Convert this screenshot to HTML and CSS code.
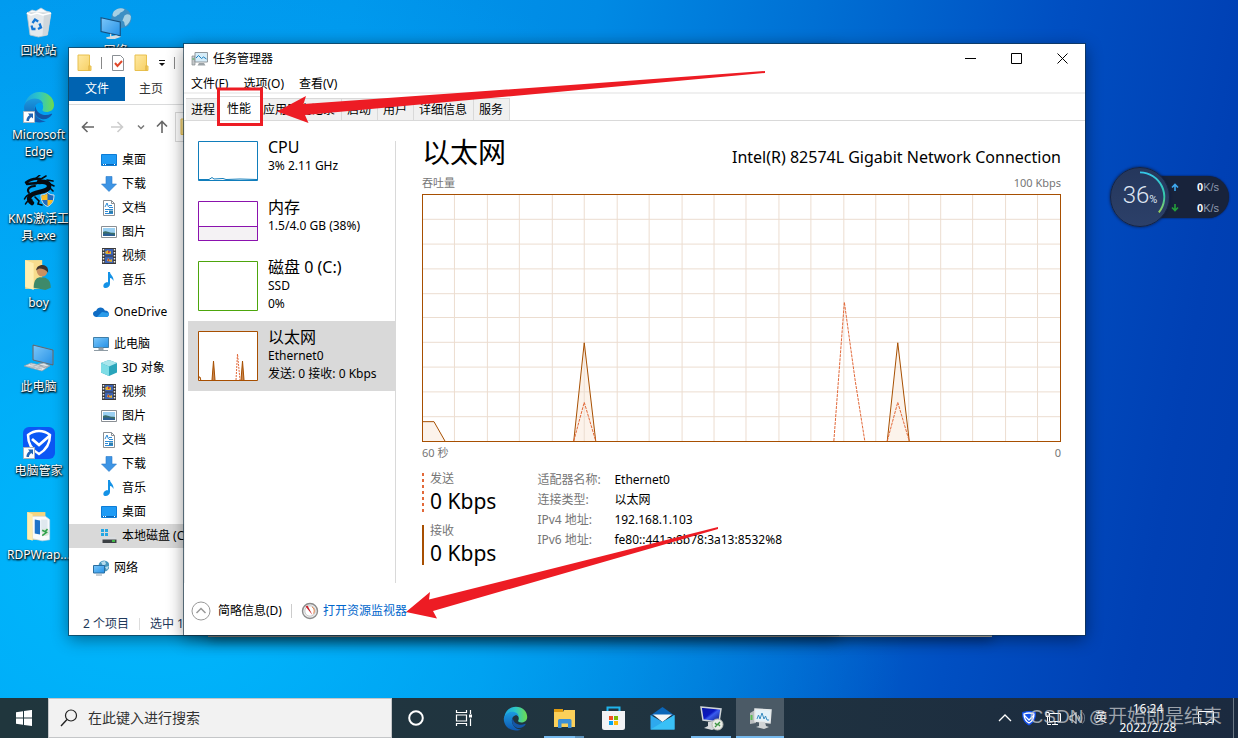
FILE: index.html
```html
<!DOCTYPE html>
<html lang="zh-CN">
<head>
<meta charset="utf-8">
<title>任务管理器</title>
<link rel="stylesheet" href="styles.css">
</head>
<body>
<svg class="defs" aria-hidden="true">
  <defs>
    <linearGradient id="g-fold" x1="0" y1="0" x2="1" y2="1"><stop offset="0" stop-color="#ffe9a2"/><stop offset="1" stop-color="#f6cf62"/></linearGradient>
    <linearGradient id="g-scr" x1="0" y1="0" x2="1" y2="1"><stop offset="0" stop-color="#7cc8fa"/><stop offset="1" stop-color="#2490e6"/></linearGradient>
    <linearGradient id="g-edge1" x1="0" y1="0" x2="1" y2="0"><stop offset="0" stop-color="#1aa5e4"/><stop offset=".5" stop-color="#2fc7c4"/><stop offset="1" stop-color="#6fdd4c"/></linearGradient>
    <linearGradient id="g-edge2" x1="0" y1="0" x2="0" y2="1"><stop offset="0" stop-color="#1b9be0"/><stop offset="1" stop-color="#0f57b0"/></linearGradient>
    <linearGradient id="g-navy" x1="0" y1="0" x2="1" y2="1"><stop offset="0" stop-color="#0a18a0"/><stop offset=".45" stop-color="#0a18c0"/><stop offset=".55" stop-color="#3a5cf0"/><stop offset="1" stop-color="#04106a"/></linearGradient>
    <linearGradient id="g-ring" x1="0" y1="0" x2="0" y2="1"><stop offset="0" stop-color="#35c6e8"/><stop offset=".6" stop-color="#35c8a8"/><stop offset="1" stop-color="#9ad05a"/></linearGradient>
  </defs>
  <symbol id="i-folder" viewBox="0 0 16 18"><path d="M1 1h11.500v11H14v4.500H1z" fill="url(#g-fold)" stroke="#e8c04e"/><path d="M12 11.500v5" stroke="#d8a838"/></symbol>
  <symbol id="i-shortcut" viewBox="0 0 12 12"><path d="M.5.5h11v11H.5z" fill="#fff" stroke="#a8b4c0"/><path d="M5 2.500h5v5L8.300 5.900C6.500 7 6 8.500 6 10L3.500 10C3.200 7.500 4.500 5.400 6.500 4.200z" fill="#2265b5"/></symbol>
  <symbol id="i-edge" viewBox="0 0 32 32">
    <path d="M2 17C1 8 8 1 16.500 1 25 1 31 7 31 14c0 5-4 7-7.500 7-3 0-4.500-1.200-4-2.300C21.500 15 19 10 13.500 10 7 10 3 13 2 17z" fill="url(#g-edge1)"/>
    <path d="M1 16c.5-4.500 5-8.500 11-8.500 5 0 8 3 8 6.500-1-2-3-2.500-4.500-2-4.500 1.500-5.500 8-2.500 12.500 2 3.500 6 5.500 10 5.500C17 33.500 1 31 1 16z" fill="url(#g-edge2)"/>
    <path d="M12.500 15c-2.500 6 .5 11.500 6 13 4 .9 8-.5 10.500-4.500.4-.7-.2-1-.8-.7-6.200 3.200-15.200.2-15.700-7.800z" fill="#1456a6"/>
  </symbol>
  <symbol id="i-bin" viewBox="0 0 30 32">
    <path d="M3 6l5-3 4 1 5-3 5 3 4 1-1 3H4z" fill="#f6f9fb" stroke="#c4ccd2" stroke-width=".7"/>
    <path d="M3 6h24l-3.500 22-9 2-8.500-2z" fill="#e3e9ed" stroke="#bac4ca" stroke-width=".8"/>
    <path d="M20 7h7l-3.500 21-5 1z" fill="#cfd7dc"/>
    <path d="M3 6l4 2 6-2 6 2 8-2" fill="none" stroke="#fff" stroke-width="1.500"/>
    <g fill="none" stroke="#1576d4" stroke-width="2.300"><path d="M8.500 16l2.500-3.500 3.200 2"/><path d="M15.500 16.500l1.500 4-3 1.500"/><path d="M7.500 18.500l1 3.500h3"/></g>
  </symbol>
  <symbol id="i-globe" viewBox="0 0 30 30">
    <circle cx="20" cy="10.500" r="9.500" fill="#3c8fc4"/><path d="M13 4c3-3 7-3.500 10-2-1 3-4 2-5 5-2 0-3 3-5 2-2-1-1-3 0-5zM23 8c3-2 5-1 6 1 0 4-2 7-5 9-2-2 0-4-3-5z" fill="#a5d0e4"/>
    <path d="M1 10l18 4v13L1 23z" fill="url(#g-scr)" stroke="#164f7e" stroke-width="1"/><path d="M10 25v3M6 29l9-2 3 1-6 2z" stroke="#d9dfe3" stroke-width="1.200" fill="#d9dfe3"/>
  </symbol>
  <symbol id="i-dragon" viewBox="0 0 32 32">
    <g fill="none" stroke="#060a10" stroke-linecap="round"><path d="M16 7c6-1 11 1 10 5-1 5-10 4-16 7-5 2.500-5 6-1 9" stroke-width="4.500"/><path d="M3 7.500c4-3 8-4.500 14-3.500M4 9c4-1 6 0 10-1" stroke-width="2.500"/><path d="M8 20c-3-1-5 1-6.500 4M9 25c-3 0-5 1-6.500 4M12 22l4 4-1 3 4 1M24 5l6 1M25 8l6 3M27 13l3 3M12 4l5-4M18 4l5-3" stroke-width="1.600"/><path d="M6 18c-3-4 1-7 6-7" stroke-width="2"/></g>
    <path d="M18 20c3 0 5-1 6.500-2.500C26 19 28 20 31 20c0 6-2 9.500-6.500 11.500C20 29.500 18 26 18 20z" fill="#1f6dc0" stroke="#dce6ee"/>
    <path d="M24.500 18.500V25H19c-.4-1.300-.5-2.700-.5-4.500 2.500 0 4.500-.8 6-2z" fill="#fcbc25"/><path d="M24.500 25h5.500c-1 3-2.700 4.700-5.500 6z" fill="#fcbc25"/>
  </symbol>
  <symbol id="i-user" viewBox="0 0 28 30"><path d="M1 1h16v27H1z" fill="#f7dc8c"/><path d="M1 1l8 3v25l-8-3z" fill="#ffeeb0"/><path d="M9 27c0-8 3-10 7-10 6 0 9 3 9 10l-5 2z" fill="#3e8a6a"/><circle cx="17" cy="11.500" r="5" fill="#c99062"/><path d="M11.500 11c-1-6 10-8 11-1l0 3c-2-3-5-4-8-4-1 0-2 1-3 2z" fill="#3c332d"/></symbol>
  <symbol id="i-computer" viewBox="0 0 32 30"><path d="M10 1l20 5v15L10 16z" fill="url(#g-scr)" stroke="#8b9aa5"/><path d="M10 1l20 5v15L10 16z" fill="none" stroke="#334a5c" stroke-width=".6"/><path d="M15 20l6-1 6 3-5 2zM1 22l7-3 17 4-6 4z" fill="#dfe4e8" stroke="#8f9aa2" stroke-width=".7"/><path d="M4 22l15 3M7 20.500l15 3.200M8 24l7-3.500M13 25l6-3" stroke="#a3adb5" stroke-width=".7"/></symbol>
  <symbol id="i-shield" viewBox="0 0 32 32"><rect width="32" height="32" rx="6" fill="#0b57f5"/><path d="M16 4c4 0 8 1.500 11 4 0 9-4 15-11 19C9 23 5 17 5 8c3-2.500 7-4 11-4z" fill="none" stroke="#fff" stroke-width="2.500"/><path d="M9 12l7 6L27 8.500" fill="none" stroke="#fff" stroke-width="2.800"/></symbol>
  <symbol id="i-fileset" viewBox="0 0 24 30"><path d="M1 1h17v26H1z" fill="#f5d57e"/><path d="M5 5h13l4 3v19l-7 1-9-2z" fill="#f9fbfc" stroke="#c8d2d8" stroke-width=".6"/><path d="M8 8l5 1v13l-5-1z" fill="#1e73c8"/><path d="M14 8h6v12h-6z" fill="#dfe8ee"/><circle cx="18" cy="20" r="3.500" fill="#dce8dc"/><path d="M15 18l4 2-4 3M20 17l-2 2" stroke="#31a24c" stroke-width="1.500" fill="none"/><path d="M1 1l5 2v25l-5-2z" fill="#ffedb0"/></symbol>
  <symbol id="i-desk" viewBox="0 0 16 16"><path d="M.5 2.500h15v11H.5z" fill="#1e9bf5" stroke="#0d7cd6"/><path d="M1 12h14v1H1z" fill="#0a66b8"/><path d="M2 12.500h1M4 12.500h1M13 12.500h1" stroke="#fff"/></symbol>
  <symbol id="i-down" viewBox="0 0 16 16"><path d="M5 .5h6V8h4.500L8 15.500.5 8H5z" fill="#3d94e4" stroke="#2a7bca" stroke-width=".6"/></symbol>
  <symbol id="i-doc" viewBox="0 0 16 16"><path d="M2.500.5h8l3 3v12h-11z" fill="#fff" stroke="#8a8f94"/><path d="M10.500.5v3h3" fill="none" stroke="#8a8f94"/><path d="M4 7l2-4 1.500 4M8 5.500h3M8 7.500h4M4 9.500h8M4 11.500h3M4 13.500h8" stroke="#2d8bd6" fill="none"/><path d="M8 10.500h4v2.500H8z" fill="#2d7fae"/></symbol>
  <symbol id="i-pic" viewBox="0 0 16 16"><path d="M.5 2.500h15v11H.5z" fill="#fff" stroke="#8a8f94"/><path d="M2 4h12v8H2z" fill="#9bd0f2"/><path d="M2 8c3-2 5 1 12 1v3H2z" fill="#3b6e6a"/><path d="M2 10c5-1 8 0 12 1v1H2z" fill="#2b5f94"/></symbol>
  <symbol id="i-video" viewBox="0 0 16 16"><path d="M1 0h14v16H1z" fill="#3a3a3c"/><path d="M4 1h8v6.500H4z" fill="#3c62b4"/><path d="M4 8.500h8V15H4z" fill="#3c62b4"/><path d="M4 4l3-2 1 2 2-1v3H5zM6 13l1-3 2 2 2-1v3z" fill="#e0b030"/><path d="M7 3h1.500v2H7zM7 11h1v2H7z" fill="#d13a2a"/><path d="M2.500 1v15M13.500 1v15" stroke="#f0f0f0" stroke-width="1.500" stroke-dasharray="1.500 1.500"/></symbol>
  <symbol id="i-music" viewBox="0 0 16 16"><path d="M7 0h2c0 3 4 4 3.500 9-1-2-2-3-3.500-3v6c0 2-2 4-4.500 4S2 13.500 3 12s2.500-2 4-1.700z" fill="#1492e6"/></symbol>
  <symbol id="i-cloud" viewBox="0 0 16 16"><path d="M3.500 13C1.500 13 0 11.700 0 9.800 0 8 1.500 6.700 3.200 6.700 4 4.500 5.700 3.500 7.500 3.500c2 0 3.500 1 4.300 2.900C14.500 6.500 16 8 16 9.900S14.600 13 12.700 13z" fill="#0f6cc4"/><path d="M4 13l5-5 6.500 1c1 2 0 4-2.800 4z" fill="#2b9cea"/></symbol>
  <symbol id="i-pc" viewBox="0 0 16 16"><path d="M.5 1.500h15v10H.5z" fill="url(#g-scr)" stroke="#3f7ea8"/><path d="M6 12h4v2H6zM1 14.500h14" fill="#9aa7b0" stroke="#8f9ca5"/></symbol>
  <symbol id="i-cube" viewBox="0 0 16 16"><path d="M8 0l8 3v9.500L8 16l-8-3.500V3z" fill="#2aa5bb"/><path d="M8 0l8 3-8 3.500L0 3z" fill="#a9e6ec"/><path d="M0 3l8 3.500V16l-8-3.500z" fill="#7edde6"/></symbol>
  <symbol id="i-disk" viewBox="0 0 16 16"><path d="M0 1h3v3H0zM4 1h3v3H4zM0 5h3v3H0zM4 5h3v3H4z" fill="#25a7e4"/><path d="M3 9h11l1.500 3H1.500z" fill="#dadde0"/><path d="M1.500 11.500h14V15h-14z" fill="#3c4044"/><path d="M11 13h3" stroke="#45e04a" stroke-width="1.500"/></symbol>
  <symbol id="i-chart" viewBox="0 0 18 16"><path d="M1 5h3v9H1z" fill="#c4c8ca" stroke="#85898c" stroke-width=".7"/><path d="M1.500 8h2" stroke="#3fae49"/><path d="M4 1.500h12.500v9.500H4z" fill="#d5ecf8" stroke="#8f979c"/><path d="M5 7l2.500-2.500 3 3 2-1.500 3 2" fill="none" stroke="#1a7fc0"/><path d="M8 12h5l1.500 2.500h-8z" fill="#9ca3a7"/></symbol>
</svg>

<main class="desktop">
  <nav class="shortcuts" aria-label="桌面">
    <a href="#" class="shortcut"><svg class="shortcut-icon"><use href="#i-bin"/></svg><span>回收站</span></a>
    <a href="#" class="shortcut"><span class="badged"><svg class="shortcut-icon"><use href="#i-edge"/></svg><svg class="badge"><use href="#i-shortcut"/></svg></span><span>Microsoft Edge</span></a>
    <a href="#" class="shortcut"><svg class="shortcut-icon"><use href="#i-dragon"/></svg><span>KMS激活工具.exe</span></a>
    <a href="#" class="shortcut"><svg class="shortcut-icon"><use href="#i-user"/></svg><span>boy</span></a>
    <a href="#" class="shortcut"><svg class="shortcut-icon"><use href="#i-computer"/></svg><span>此电脑</span></a>
    <a href="#" class="shortcut"><span class="badged"><svg class="shortcut-icon"><use href="#i-shield"/></svg><svg class="badge"><use href="#i-shortcut"/></svg></span><span>电脑管家</span></a>
    <a href="#" class="shortcut"><svg class="shortcut-icon"><use href="#i-fileset"/></svg><span>RDPWrap...</span></a>
    <a href="#" class="shortcut"><svg class="shortcut-icon"><use href="#i-globe"/></svg><span>网络</span></a>
  </nav>

  <div class="window back-window"></div>

  <section class="window explorer" aria-label="文件资源管理器">
    <header class="ex-title">
      <svg class="ic-folder"><use href="#i-folder"/></svg><i class="sep"></i>
      <svg class="ic-16" viewBox="0 0 16 16"><path d="M2.500.5h8l3 3v12h-11z" fill="#fff" stroke="#8a8f94"/><path d="M5 8l2.500 3L12 6" fill="none" stroke="#e0482a" stroke-width="2"/></svg>
      <svg class="ic-folder"><use href="#i-folder"/></svg>
      <svg class="ic-8" viewBox="0 0 8 8"><path d="M1 1.500h6" stroke="#111"/><path d="M1 4h6L4 7z" fill="#111"/></svg>
      <i class="sep"></i><span>R</span>
    </header>
    <div class="ribbon"><button class="ribbon-file">文件</button><button class="ribbon-tab">主页</button></div>
    <div class="ex-nav">
      <svg class="ic-14" viewBox="0 0 14 14"><path d="M13 7H2M6.500 2L1.500 7l5 5" fill="none" stroke="#666" stroke-width="1.600"/></svg>
      <svg class="ic-14" viewBox="0 0 14 14"><path d="M1 7h11M7.500 2l5 5-5 5" fill="none" stroke="#ccc" stroke-width="1.600"/></svg>
      <svg class="ic-8" viewBox="0 0 8 8"><path d="M1 2.500l3 3 3-3" fill="none" stroke="#777" stroke-width="1.500"/></svg>
      <svg class="ic-14" viewBox="0 0 14 14"><path d="M7 13V2M2 6.500l5-5 5 5" fill="none" stroke="#666" stroke-width="1.600"/></svg>
      <div class="address"><svg class="ic-folder"><use href="#i-folder"/></svg></div>
    </div>
    <div class="tree">
      <a href="#" class="node child"><svg><use href="#i-desk"/></svg>桌面</a>
      <a href="#" class="node child"><svg><use href="#i-down"/></svg>下载</a>
      <a href="#" class="node child"><svg><use href="#i-doc"/></svg>文档</a>
      <a href="#" class="node child"><svg><use href="#i-pic"/></svg>图片</a>
      <a href="#" class="node child"><svg><use href="#i-video"/></svg>视频</a>
      <a href="#" class="node child"><svg><use href="#i-music"/></svg>音乐</a>
      <a href="#" class="node root"><svg><use href="#i-cloud"/></svg>OneDrive</a>
      <a href="#" class="node root"><svg><use href="#i-pc"/></svg>此电脑</a>
      <a href="#" class="node child"><svg><use href="#i-cube"/></svg>3D 对象</a>
      <a href="#" class="node child"><svg><use href="#i-video"/></svg>视频</a>
      <a href="#" class="node child"><svg><use href="#i-pic"/></svg>图片</a>
      <a href="#" class="node child"><svg><use href="#i-doc"/></svg>文档</a>
      <a href="#" class="node child"><svg><use href="#i-down"/></svg>下载</a>
      <a href="#" class="node child"><svg><use href="#i-music"/></svg>音乐</a>
      <a href="#" class="node child"><svg><use href="#i-desk"/></svg>桌面</a>
      <a href="#" class="node child current"><svg><use href="#i-disk"/></svg>本地磁盘 (C:)</a>
      <a href="#" class="node root"><svg viewBox="0 0 16 16"><circle cx="11" cy="6" r="5.500" fill="#4596bd"/><path d="M8 2l4-1 1 3-3 2zM12 7l4-1-2 4z" fill="#b7dcec"/><path d="M.5 5.500h11v7.500H.5z" fill="url(#g-scr)" stroke="#2a6d9f"/><path d="M3 15h6" stroke="#8ea0ac"/></svg>网络</a>
    </div>
    <footer class="ex-status"><span>2 个项目</span><i></i><span>选中 1</span></footer>
  </section>

  <section class="window manager" aria-label="任务管理器">
    <header class="tm-title">
      <svg class="tm-icon"><use href="#i-chart"/></svg><h1>任务管理器</h1>
      <button aria-label="最小化"><svg viewBox="0 0 11 11"><path d="M0 5.500h11" stroke="#000"/></svg></button>
      <button aria-label="最大化"><svg viewBox="0 0 11 11"><path d="M.5.500h10v10H.5z" fill="none" stroke="#000"/></svg></button>
      <button aria-label="关闭"><svg viewBox="0 0 11 11"><path d="M.5.500l10 10M10.500.500l-10 10" stroke="#000"/></svg></button>
    </header>
    <nav class="menu"><button>文件(F)</button><button>选项(O)</button><button>查看(V)</button></nav>
    <div class="tabs" role="tablist">
      <button role="tab">进程</button><button role="tab" class="selected" aria-selected="true">性能</button><button role="tab">应用历史记录</button><button role="tab">启动</button><button role="tab">用户</button><button role="tab">详细信息</button><button role="tab">服务</button>
    </div>
    <div class="tm-body">
      <aside class="resources">
        <button class="resource">
          <svg class="thumb" viewBox="0 0 60 40"><path d="M.5.500h59v39H.5z" fill="#fff" stroke="#117dbb"/><path d="M1 38.500h10l3-2 2 1.500 9-.500 3 1 14-.500 17 .500" fill="none" stroke="#117dbb"/></svg>
          <span class="res-text"><strong>CPU</strong><span>3% 2.11 GHz</span></span>
        </button>
        <button class="resource">
          <svg class="thumb" viewBox="0 0 60 40"><path d="M.5.500h59v39H.5z" fill="#fff"/><path d="M.5 25.500h59v14H.5z" fill="#f4f2f4" stroke="#8b12ae"/><path d="M.5.500h59v39H.5z" fill="none" stroke="#8b12ae"/></svg>
          <span class="res-text"><strong>内存</strong><span>1.5/4.0 GB (38%)</span></span>
        </button>
        <button class="resource">
          <svg class="thumb tall" viewBox="0 0 60 50"><path d="M.5.500h59v49H.5z" fill="#fff" stroke="#4da60c"/></svg>
          <span class="res-text"><strong>磁盘 0 (C:)</strong><span>SSD</span><span>0%</span></span>
        </button>
        <button class="resource active">
          <svg class="thumb tall" viewBox="0 0 60 50"><path d="M.5.500h59v49H.5z" fill="#fff" stroke="#a74f01"/><path d="M1 46l1 0 1 4M14 49l1.500-19L17 49M43 49l1.500-19L46 49" fill="#c98750" stroke="#a74f01"/><path d="M38 49l1.500-26L42 49" fill="none" stroke="#e2693a" stroke-dasharray="2 1"/></svg>
          <span class="res-text"><strong>以太网</strong><span>Ethernet0</span><span>发送: 0 接收: 0 Kbps</span></span>
        </button>
      </aside>
      <section class="detail">
        <div class="heading"><h2>以太网</h2><p>Intel(R) 82574L Gigabit Network Connection</p></div>
        <div class="scale"><span>吞吐量</span><span>100 Kbps</span></div>
        <div class="chart">
          <svg viewBox="0 0 638 248" preserveAspectRatio="none" role="img" aria-label="吞吐量">
            <path class="fill" d="M0 229h11l11 19H0zM151 248l11-99 11 99zM465 248l11-99 11 99z"/>
            <path class="grid" d="M31.500 0v248M64.500 0v248M96.500 0v248M129.500 0v248M161.500 0v248M194.500 0v248M226.500 0v248M259.500 0v248M291.500 0v248M323.500 0v248M356.500 0v248M388.500 0v248M421.500 0v248M453.500 0v248M486.500 0v248M518.500 0v248M550.500 0v248M583.500 0v248M615.500 0v248M0 24.500h638M0 49.500h638M0 74.500h638M0 99.500h638M0 123.500h638M0 148.500h638M0 173.500h638M0 198.500h638M0 223.500h638"/>
            <path class="received" d="M0 228.500h11l11 19.500M151 248l10.500-99L173 248M465 248l10.500-99L487 248"/>
            <path class="sent" d="M151 248l10.500-39L173 248M411.500 248l10.500-140 11 80 9.500 60M465 248l10.500-39L487 248"/>
          </svg>
        </div>
        <div class="scale axis"><span>60 秒</span><span>0</span></div>
        <div class="stats">
          <div class="rates">
            <div class="rate out"><span>发送</span><b>0 Kbps</b></div>
            <div class="rate in"><span>接收</span><b>0 Kbps</b></div>
          </div>
          <table class="facts">
            <tr><th scope="row">适配器名称:</th><td>Ethernet0</td></tr>
            <tr><th scope="row">连接类型:</th><td>以太网</td></tr>
            <tr><th scope="row">IPv4 地址:</th><td>192.168.1.103</td></tr>
            <tr><th scope="row">IPv6 地址:</th><td>fe80::441a:8b78:3a13:8532%8</td></tr>
          </table>
        </div>
      </section>
    </div>
    <footer class="tm-foot">
      <button><svg viewBox="0 0 20 20"><circle cx="10" cy="10" r="9" fill="#fff" stroke="#999"/><path d="M5.500 12L10 7.500l4.500 4.500" fill="none" stroke="#999" stroke-width="1.500"/></svg>简略信息(D)</button>
      <i></i>
      <a href="#"><svg viewBox="0 0 18 18"><circle cx="9" cy="9" r="7.500" fill="#eee" stroke="#8b8b8b" stroke-width="1.400"/><circle cx="9" cy="9" r="5.200" fill="#fff" stroke="#c8c8c8"/><path d="M4.500 4.500l2-1L11.500 13z" fill="#c8202a"/><path d="M11 5c2 1 3 4 1.500 6.500" fill="none" stroke="#e8702a"/></svg>打开资源监视器</a>
    </footer>
    <svg class="marks" aria-hidden="true" viewBox="184 44 901 591">
      <g fill="#ed1c24"><path d="M277 111.500L306 96l-2.500 8L765 71v2L305 115l3.500 8z"/><path d="M406 612l24-20-1 7.500L718 527v2L433 611l4 7.500z"/></g>
      <path d="M218.500 89h43v35.500h-43z" fill="none" stroke="#ed1c24" stroke-width="3"/>
    </svg>
  </section>

  <aside class="monitor" aria-label="网速">
    <div class="gauge">
      <svg viewBox="0 0 60 60"><path d="M30 4.500A25.500 25.500 0 0 1 49.500 46" fill="none" stroke="url(#g-ring)" stroke-width="2"/></svg>
      <span class="pct">36<small>%</small></span>
    </div>
    <div class="speeds">
      <div><svg viewBox="0 0 8 8"><path d="M4 8V2M1 4.500L4 1.500l3 3" fill="none" stroke="#3fa9f0" stroke-width="1.600"/></svg><b>0</b><span>K/s</span></div>
      <div><svg viewBox="0 0 8 8"><path d="M4 0v6M1 3.500l3 3 3-3" fill="none" stroke="#25a03c" stroke-width="1.600"/></svg><b>0</b><span>K/s</span></div>
    </div>
  </aside>
</main>

<footer class="taskbar">
  <button class="tb" aria-label="开始"><svg class="s16" viewBox="0 0 16 16"><path d="M0 2.200L7 1.200V7.500H0zM8 1l8-1.100V7.500H8zM0 8.500h7v6.300l-7-1zM8 8.500h8V16l-8-1.100z" fill="#fff"/></svg></button>
  <label class="search"><svg viewBox="0 0 18 18"><circle cx="11" cy="6.500" r="5.500" fill="none" stroke="#222" stroke-width="1.200"/><path d="M7 10.500L1 17" stroke="#222" stroke-width="1.400"/></svg><input type="text" placeholder="在此键入进行搜索" aria-label="搜索"></label>
  <button class="tb" aria-label="Cortana"><svg class="s16" viewBox="0 0 16 16"><circle cx="8" cy="8" r="6.800" fill="none" stroke="#fff" stroke-width="2"/></svg></button>
  <button class="tb" aria-label="任务视图"><svg class="s18" viewBox="0 0 18 18"><path d="M1.500 1v2.500h10V1M1.500 17v-2.500h10V17M1.500 6h10v6h-10zM15.500 1v4M15.500 9.500V17" fill="none" stroke="#fff" stroke-width="1.200"/><path d="M14 5.500h3v3h-3z" fill="#fff"/></svg></button>
  <div class="apps">
    <button class="tb" aria-label="Edge"><svg class="s25"><use href="#i-edge"/></svg></button>
    <button class="tb running stacked" aria-label="资源管理器"><svg class="s23" viewBox="0 0 23 23"><path d="M1 2h9v4H1z" fill="#e09b10"/><path d="M1 5h9l1-2h11v17H1z" fill="#fbd05a"/><path d="M5 13.500Q5 12 6.500 12h10.500q1.500 0 1.500 1.500V21h-3.500v-4.500H8.500V21H5z" fill="#3c8fd6"/></svg></button>
    <button class="tb" aria-label="商店"><svg class="s25" viewBox="0 0 25 25"><path d="M6.500 6V1.500h12V6" fill="none" stroke="#1fb4ec" stroke-width="2"/><path d="M1 5h23v16.500a2.500 2.500 0 0 1-2.500 2.500h-18A2.500 2.500 0 0 1 1 21.500z" fill="#f2f3f5"/><path d="M8 10h4v4H8z" fill="#f05023"/><path d="M13 10h4v4h-4z" fill="#7fba02"/><path d="M8 15h4v4H8z" fill="#05a5f0"/><path d="M13 15h4v4h-4z" fill="#ffb902"/></svg></button>
    <button class="tb" aria-label="邮件"><svg class="s25" viewBox="0 0 25 25"><path d="M.5 9.500L12.500 1l12 8.500z" fill="#0b66b8"/><path d="M3 8.500h19L12.500 16z" fill="#f4f6f8"/><path d="M.5 9l12 7 12-7V23.500H.5z" fill="#2ea9ee"/><path d="M.5 23.500l24-14.500v14.500z" fill="#39c0f6"/></svg></button>
    <button class="tb running" aria-label="远程桌面"><svg class="s25" viewBox="0 0 25 25"><path d="M2 1l20 2-2 13L4 14z" fill="url(#g-navy)" stroke="#cfd5d8" stroke-width="1.500"/><path d="M9 16h6l1 4 2 2-5 2-8-2 4-2z" fill="#d5d8da"/><circle cx="18.500" cy="18.500" r="5.500" fill="#e9ebe6" stroke="#b5bab3"/><path d="M16 17l2 2-2 2M21 16l-2 2 2 2" fill="none" stroke="#3b9440" stroke-width="1.400"/></svg></button>
    <button class="tb running focused" aria-label="任务管理器"><svg class="s25" viewBox="0 0 25 25"><path d="M2 7l5-3 1 13-6 1z" fill="#b9bdbf"/><path d="M2.500 9h2v5h-2z" fill="#5dbf55"/><path d="M7 3l16 1-1 13L7 15z" fill="#e4f1f8" stroke="#e6e9ea" stroke-width="1.500"/><path d="M9 13l1.500-4 1.500 4 2-6 2 6 1.500-3 1.500 4h2" fill="none" stroke="#3a8dc2"/><path d="M11 16h6l1 4 3 1-5 2-8-2 3-1z" fill="#d0d4d6"/></svg></button>
  </div>
  <div class="tray">
    <button class="ti" aria-label="显示隐藏的图标"><svg class="s16" viewBox="0 0 16 16"><path d="M2 11l6-6 6 6" fill="none" stroke="#fff" stroke-width="1.300"/></svg></button>
    <button class="ti" aria-label="电脑管家"><svg class="s16" viewBox="0 0 16 16"><path d="M8 1c3 0 5 .5 7 1.500C15 9 13 13 8 15.500 3 13 1 9 1 2.500 3 1.500 5 1 8 1z" fill="#1450ea"/><path d="M8 3c2 0 3.500.4 5 1 0 4-1.500 7-5 9-3.500-2-5-5-5-9 1.500-.6 3-1 5-1zM3 5l5 5 5-5" fill="none" stroke="#fff" stroke-width="1.300"/></svg></button>
    <button class="ti" aria-label="网络"><svg class="s16" viewBox="0 0 16 16"><path d="M4.500 3.500h11v8h-11zM7 14.500h6M10 12v2M1 2.500h3v4H1zM2.500 7v7.500H6" fill="none" stroke="#fff"/></svg></button>
    <button class="ti" aria-label="音量"><svg class="s16" viewBox="0 0 16 16"><path d="M1 6h2.500L7 2.500v11L3.500 10H1z" fill="none" stroke="#fff"/><path d="M9.500 5.500c1 1.500 1 3.500 0 5" fill="none" stroke="#fff"/><path d="M11.500 4c2 2.500 2 5.500 0 8M13.500 2.500c3 3.500 3 7.500 0 11" fill="none" stroke="#7b8794"/></svg></button>
    <button class="ti">英</button>
    <time class="clock"><span>16:24</span><span>2022/2/28</span></time>
    <button class="ti note" aria-label="通知"><svg class="s16" viewBox="0 0 16 16"><path d="M.5 1.500h15v11H11L8 15v-2.500H.5z" fill="none" stroke="#fff"/></svg></button>
    <i class="peek"></i>
    <span class="watermark">CSDN @开始即是结束</span>
  </div>
</footer>
</body>
</html>
```
FILE: styles.css
```css
* { box-sizing: border-box; }

html, body { height: 100%; }

body {
  margin: 0;
  display: flex;
  flex-direction: column;
  overflow: hidden;
  font: 12px/18px "Noto Sans", "Noto Sans CJK SC", sans-serif;
  color: #000;
}

button {
  margin: 0;
  padding: 0;
  border: 0;
  background: none;
  font: inherit;
  color: inherit;
}

a { color: inherit; text-decoration: none; }
svg { display: block; flex: none; }
h1, h2, p { margin: 0; font-weight: 400; }
.defs { position: absolute; width: 0; height: 0; }

/* Desktop */
.desktop {
  position: relative;
  flex: 1;
  min-height: 0;
  background:
    radial-gradient(ellipse 62% 90% at 12% 80%, rgba(0, 188, 255, .9), rgba(0, 180, 255, 0)),
    linear-gradient(100deg, #0098ee 0%, #0096ec 26%, #008ae4 44%, #0070d4 60%, #004fc2 78%, #0040b4 92%, #003cae 100%);
}

.shortcuts {
  display: grid;
  grid-template-columns: 77px 77px;
  grid-template-rows: repeat(7, 84px);
  grid-auto-flow: column;
  padding-top: 7px;
}

.shortcut {
  display: flex;
  flex-direction: column;
  align-items: center;
  gap: 3px;
  padding: 0 4px;
  line-height: 17px;
  color: #fff;
  text-align: center;
  text-shadow: 0 1px 2px #000, 1px 1px 2px #000;
}
.shortcut-icon { width: 32px; height: 32px; }
.badged { position: relative; }
.badge { position: absolute; left: 0; bottom: 0; width: 12px; height: 12px; }

.window {
  position: absolute;
  background: #fff;
  box-shadow: 0 0 0 1px rgba(20, 50, 70, .65), 0 4px 16px rgba(0, 0, 0, .45);
}

.back-window { left: 208px; right: 246px; top: 80px; bottom: 61px; background: #b5b0a8; box-shadow: 0 4px 12px rgba(0, 0, 0, .3); }

/* Explorer */
.explorer {
  left: 69px;
  right: 400px;
  top: 48px;
  bottom: 63px;
  display: flex;
  flex-direction: column;
}
.ex-title { display: flex; align-items: center; gap: 8px; height: 29px; padding-left: 8px; color: #999; }
.sep { width: 1px; height: 12px; background: #888; }
.ic-folder { width: 16px; height: 18px; }
.ic-16 { width: 16px; height: 16px; }
.ic-14 { width: 14px; height: 14px; }
.ic-8 { width: 8px; height: 8px; }
.ribbon { display: flex; height: 28px; border-bottom: 1px solid #dadbdc; }
.ribbon-file { width: 56px; height: 24px; background: #0063b1; color: #fff; }
.ribbon-tab { width: 52px; height: 24px; color: #333; }
.ex-nav { display: flex; align-items: center; height: 43px; padding-left: 12px; gap: 15px; }
.ex-nav .ic-8 { margin: 0 -5px 0 -2px; }
.address { flex: 1; height: 30px; margin-left: -9px; padding: 5px 4px; border: 1px solid #d9d9d9; }
.tree { flex: 1; }
.node { display: flex; align-items: center; gap: 5px; height: 24px; padding-left: 24px; }
.node svg { width: 16px; height: 16px; }
.child { padding-left: 32px; }
.root { margin-top: 8px; }
.current { background: #d9d9d9; }
.ex-status { display: flex; align-items: center; gap: 10px; height: 23px; padding-left: 14px; color: #1e395b; }
.ex-status i { width: 1px; height: 12px; background: #ddd; }

/* Task manager */
.manager {
  left: 184px;
  right: 153px;
  top: 44px;
  bottom: 63px;
  display: flex;
  flex-direction: column;
}
.tm-title { display: flex; align-items: center; height: 29px; padding-left: 7px; }
.tm-title h1 { flex: 1; font-size: 12px; margin-left: 4px; }
.tm-title button { display: flex; align-items: center; justify-content: center; width: 46px; height: 29px; }
.tm-title button svg { width: 11px; height: 11px; }
.tm-icon { width: 18px; height: 16px; }
.menu { display: flex; gap: 15px; height: 21px; padding: 2px 0 0 7px; border-bottom: 2px solid #f0f0f0; }
.tabs { display: flex; align-items: flex-end; height: 27px; padding: 2px 2px 0; border-bottom: 1px solid #d9d9d9; }
.tabs button {
  height: 22px;
  padding: 0 6px 0 5px;
  border: 1px solid #d9d9d9;
  border-width: 1px 1px 0 0;
  background: #f0f0f0;
  line-height: 20px;
}
.tabs .selected { position: relative; height: 24px; margin: 0 -3px; padding: 0 9px 0 8px; background: #fff; }
.tm-body { flex: 1; min-height: 0; display: flex; padding-top: 20px; border-left: 1px solid #f0f0f0; }
.resources { width: 211px; padding-left: 3px; border-right: 1px solid #d9d9d9; }
.resource { display: flex; gap: 10px; width: 100%; padding: 10px; text-align: left; white-space: nowrap; }
.resource:first-child { padding-top: 0; }
.thumb { width: 60px; height: 40px; }
.tall { height: 50px; }
.res-text { display: flex; flex-direction: column; height: 40px; margin-top: -4px; line-height: 18px; }
.res-text strong { font-size: 16px; font-weight: 400; line-height: 20px; }
.active { background: #d9d9d9; }
.detail { flex: 1; min-width: 0; display: flex; flex-direction: column; margin-top: -11px; padding: 0 24px 18px 26px; }
.heading { display: flex; justify-content: space-between; align-items: baseline; height: 44px; }
.heading h2 { font-size: 28px; line-height: 44px; }
.heading p { font-size: 16px; white-space: nowrap; }
.scale { display: flex; justify-content: space-between; padding-bottom: 2px; font-size: 11px; color: #767676; }
.chart { flex: 1; min-height: 0; border: 1px solid #a74f01; }
.chart svg { width: 100%; height: 100%; }
.chart path { vector-effect: non-scaling-stroke; fill: none; }
.chart .fill { fill: #fcf3eb; }
.grid { stroke: #ecddd0; }
.received { stroke: #a74f01; }
.sent { stroke: #e2693a; stroke-dasharray: 3 1; }
.axis { padding: 2px 0 0; }
.stats { display: flex; gap: 41px; padding-top: 8px; }
.rates { display: flex; flex-direction: column; gap: 12px; padding-top: 3px; }
.rate { position: relative; display: flex; flex-direction: column; height: 40px; padding-left: 8px; color: #767676; line-height: 12px; }
.rate::before { content: ""; position: absolute; left: 0; top: 0; bottom: 0; width: 2px; background: #a74f01; }
.out::before { background: repeating-linear-gradient(#e2693a 0 3px, #fff 3px 6px); }
.rate b { font-size: 21px; line-height: 32px; font-weight: 400; color: #000; }
.facts { border-collapse: collapse; align-self: flex-start; }
.facts th, .facts td { height: 20px; padding: 0; font-weight: 400; line-height: 18px; text-align: left; }
.facts th { width: 77px; color: #767676; }
.tm-foot { display: flex; align-items: center; gap: 9px; height: 52px; padding: 4px 0 0 7px; }
.tm-foot button, .tm-foot a { display: flex; align-items: center; gap: 7px; }
.tm-foot button svg { width: 20px; height: 20px; }
.tm-foot a svg { width: 18px; height: 18px; }
.tm-foot a { gap: 4px; color: #0066cc; }
.tm-foot i { width: 1px; height: 14px; background: #ccc; }
.marks { position: absolute; left: 0; top: 0; width: 901px; height: 591px; pointer-events: none; }

/* Speed monitor */
.monitor { position: absolute; right: 9px; top: 167px; display: flex; align-items: center; color: #dfe6f2; }
.gauge {
  position: relative;
  z-index: 1;
  display: grid;
  place-items: center;
  width: 60px;
  height: 60px;
  border: 1px solid #182440;
  border-radius: 50%;
  background: linear-gradient(#25375c, #2c4069);
  box-shadow: 0 0 3px #0a1a40;
}
.gauge svg { position: absolute; inset: 0; width: 58px; height: 58px; }
.pct { font: 300 24px/24px Roboto, sans-serif; }
.pct small { font-size: 11px; font-weight: 400; }
.speeds { width: 70px; height: 42px; margin-left: -11px; border-radius: 0 21px 21px 0; background: #18233b; box-shadow: 0 0 2px #0a1230; }
.speeds div { display: flex; align-items: center; height: 21px; padding-left: 12px; font: 11px/20px "Liberation Sans", sans-serif; color: #8f9bb0; }
.speeds svg { width: 8px; height: 8px; margin-right: 18px; }
.speeds b { color: #fff; }

/* Taskbar */
.taskbar { display: flex; height: 40px; background: linear-gradient(90deg, #20363d, #203440 50%, #1b2a3f); }
.tb { position: relative; display: flex; align-items: center; justify-content: center; width: 48px; height: 40px; }
.search { display: flex; align-items: center; flex: 0 0 344px; gap: 10px; padding-left: 11px; background: #f2f2f2; border: 1px solid #c4c6c8; }
.search svg { width: 18px; height: 18px; }
.search input { flex: 1; min-width: 0; border: 0; padding: 0; background: none; font: 14px/20px "Noto Sans", "Noto Sans CJK SC", sans-serif; }
.search input::placeholder { color: #333; opacity: 1; }
.s16 { width: 16px; height: 16px; }
.s18 { width: 18px; height: 18px; }
.s23 { width: 23px; height: 23px; }
.s25 { width: 25px; height: 25px; }
.apps { flex: 1; display: flex; gap: 1px; padding-left: 3px; }
.running::after { content: ""; position: absolute; left: 4px; right: 4px; bottom: 0; height: 2px; background: #76b9ed; }
.stacked::after { background: linear-gradient(90deg, #76b9ed 31px, #5a8fb8 31px); }
.focused { background: #4b5a66; }
.focused::after { left: 0; right: 0; }
.tray { position: relative; display: flex; align-items: center; color: #fff; }
.ti { display: flex; align-items: center; justify-content: center; width: 24px; height: 40px; }
.clock { display: flex; flex-direction: column; align-items: center; width: 70px; line-height: 19px; }
.note { width: 46px; margin-right: 4px; }
.peek { width: 5px; height: 40px; border-left: 1px solid #6a7784; }
.watermark {
  position: absolute;
  right: 16px;
  top: 5px;
  font: 19px/28px "Liberation Sans", "Noto Sans CJK SC", sans-serif;
  color: rgba(200, 203, 208, .75);
  white-space: nowrap;
  pointer-events: none;
}
```
